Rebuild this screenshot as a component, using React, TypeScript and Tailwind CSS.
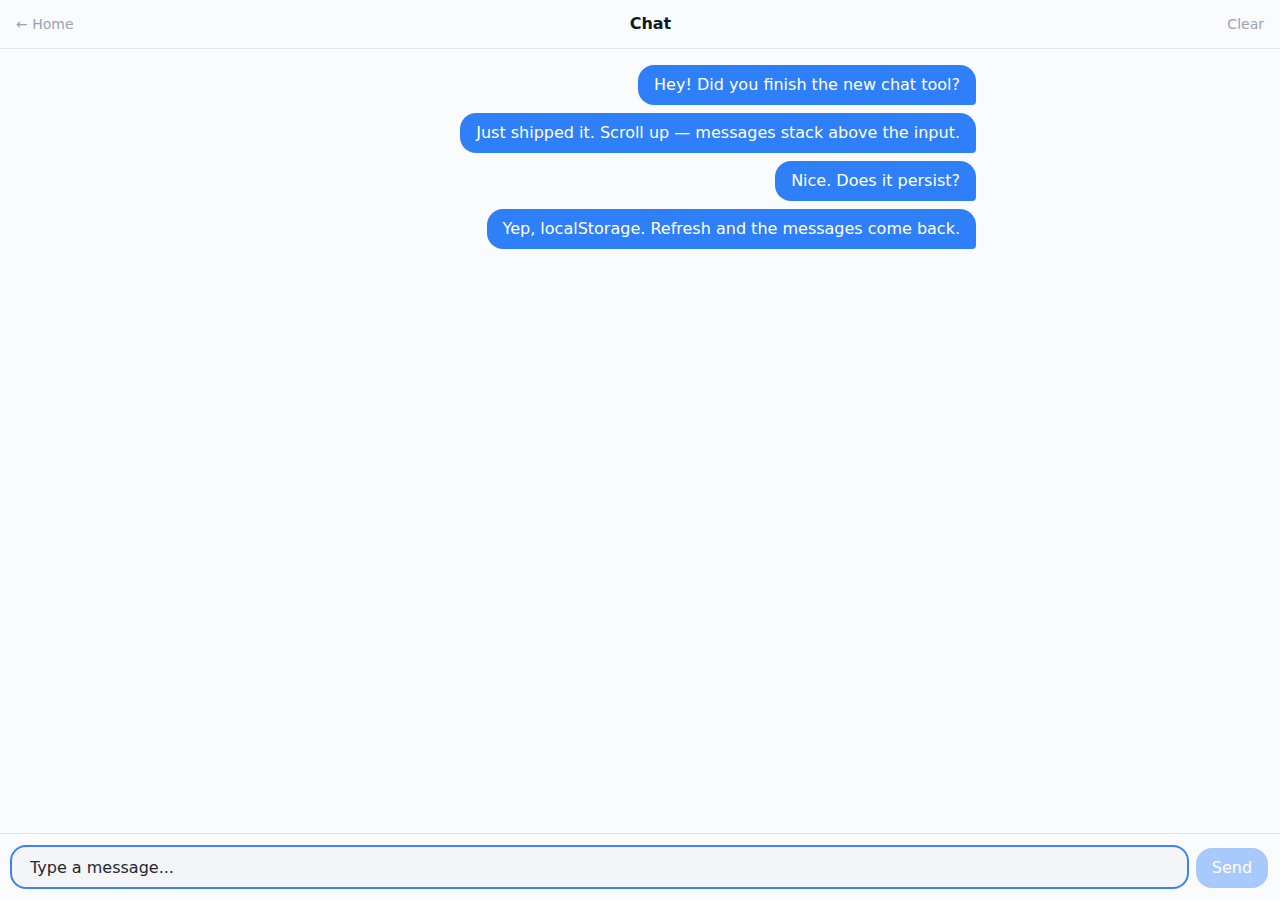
import React from "react";

const messages = [
  "Hey! Did you finish the new chat tool?",
  "Just shipped it. Scroll up — messages stack above the input.",
  "Nice. Does it persist?",
  "Yep, localStorage. Refresh and the messages come back.",
];

export default function App() {
  return (
    <div
      className="h-screen flex flex-col bg-[#f9fbfd] text-gray-900"
      style={{ fontFamily: '"DejaVu Sans", sans-serif' }}
    >
      <header className="h-[49px] shrink-0 flex items-center justify-between px-4 border-b border-[#e3e7ec]">
        <button className="text-sm text-[#9ca3af]">← Home</button>
        <h1 className="text-base font-bold text-[#111827]">Chat</h1>
        <button className="text-sm text-[#9ca3af]">Clear</button>
      </header>
      <main className="flex-1 overflow-y-auto">
        <div className="max-w-2xl mx-auto pt-4 flex flex-col items-end gap-2">
          {messages.map((m, i) => (
            <div
              key={i}
              className="bg-[#2f7ff8] text-white text-base leading-6 px-4 py-2 rounded-2xl rounded-br-[4px]"
            >
              {m}
            </div>
          ))}
        </div>
      </main>
      <footer className="shrink-0 border-t border-[#e3e7ec] px-[10px] pt-[11px] pb-[11px] flex items-center gap-[7px]">
        <input
          autoFocus
          placeholder="Type a message..."
          className="flex-1 h-[44px] rounded-2xl border-2 border-[#3b82f6] bg-[#f3f5f7] pl-[18px] pr-4 pt-[1px] text-base text-[#111827] placeholder:text-[#222831] outline-none caret-[#111827]"
        />
        <button className="h-[40px] w-[72px] mt-[1px] rounded-2xl bg-[#a8c9fb] text-white text-base mr-[2px] pt-[1px]">
          Send
        </button>
      </footer>
    </div>
  );
}
